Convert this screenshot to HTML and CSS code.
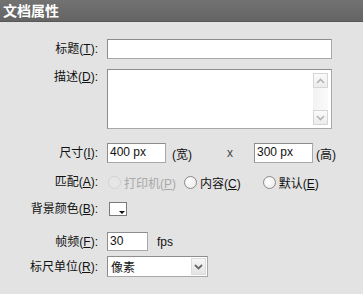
FILE: index.html
```html
<!DOCTYPE html>
<html lang="zh-CN">
<head>
<meta charset="utf-8">
<title>文档属性</title>
<link rel="stylesheet" href="styles.css">
</head>
<body>
<div class="panel">
  <div class="titlebar">文档属性</div>
  <div class="form">
    <div class="row r-title">
      <div class="label">标题(<u>T</u>):</div>
      <div class="field"><div class="input w-title"></div></div>
    </div>
    <div class="row r-desc">
      <div class="label top">描述(<u>D</u>):</div>
      <div class="field">
        <div class="textarea">
          <div class="ta-body"></div>
          <div class="scrollbar">
            <div class="sb-btn">
              <svg width="9" height="6" viewBox="0 0 9 6"><path d="M1 5 L4.5 1.5 L8 5" fill="none" stroke="#b5b5b5" stroke-width="1.6"/></svg>
            </div>
            <div class="sb-track"></div>
            <div class="sb-btn">
              <svg width="9" height="6" viewBox="0 0 9 6"><path d="M1 1 L4.5 4.5 L8 1" fill="none" stroke="#b5b5b5" stroke-width="1.6"/></svg>
            </div>
          </div>
        </div>
      </div>
    </div>
    <div class="row r-size">
      <div class="label">尺寸(<u>I</u>):</div>
      <div class="field">
        <div class="input w-size">400 px</div>
        <span class="unit u-w">(宽)</span>
        <span class="times">x</span>
        <div class="input w-size">300 px</div>
        <span class="unit u-h">(高)</span>
      </div>
    </div>
    <div class="row r-match">
      <div class="label">匹配(<u>A</u>):</div>
      <div class="field">
        <span class="radio disabled"></span><span class="rtext dis">打印机(<u>P</u>)</span>
        <span class="radio r2"></span><span class="rtext">内容(<u>C</u>)</span>
        <span class="radio r3"></span><span class="rtext">默认(<u>E</u>)</span>
      </div>
    </div>
    <div class="row r-bg">
      <div class="label">背景颜色(<u>B</u>):</div>
      <div class="field"><div class="swatch"><span class="tri"></span></div></div>
    </div>
    <div class="row r-fps">
      <div class="label">帧频(<u>F</u>):</div>
      <div class="field">
        <div class="input w-fps">30</div>
        <span class="unit u-fps">fps</span>
      </div>
    </div>
    <div class="row r-ruler">
      <div class="label">标尺单位(<u>R</u>):</div>
      <div class="field">
        <div class="select">
          <span class="sel-text">像素</span>
          <span class="sel-btn">
            <svg width="9" height="6" viewBox="0 0 9 6"><path d="M1 1 L4.5 4.5 L8 1" fill="none" stroke="#6a6a6a" stroke-width="1.8"/></svg>
          </span>
        </div>
      </div>
    </div>
  </div>
</div>
</body>
</html>
```

FILE: styles.css
```css
html, body {
  margin: 0;
  padding: 0;
  background: #e3e3e3;
}
body {
  width: 363px;
  height: 294px;
  overflow: hidden;
  font-family: "Liberation Sans", "Noto Sans CJK SC", sans-serif;
  font-size: 12px;
  color: #111;
}
.panel {
  width: 363px;
  height: 294px;
  background: #e3e3e3;
}
.titlebar {
  height: 22px;
  box-sizing: border-box;
  background: linear-gradient(#727272, #646464);
  border-bottom: 1px solid #585858;
  color: #fff;
  font-family: "Noto Sans CJK SC", sans-serif;
  font-weight: bold;
  font-size: 14px;
  line-height: 20px;
  padding-left: 3px;
}
.form {
  padding-top: 17px;
  display: flex;
  flex-direction: column;
}
.row {
  display: flex;
  align-items: center;
}
.label {
  width: 98px;
  flex: none;
  text-align: right;
  padding-right: 9px;
  box-sizing: content-box;
  white-space: nowrap;
  line-height: 14px;
  color: #111;
}
.label.top {
  align-self: flex-start;
  padding-top: 1px;
}
.field {
  display: flex;
  align-items: center;
  height: 100%;
}
u {
  text-decoration: underline;
  text-underline-offset: 1px;
}

.r-title { height: 20px; }
.r-desc { height: 60px; margin-top: 10px; }
.r-size { height: 20px; margin-top: 14px; }
.r-match { height: 14px; margin-top: 12px; }
.r-bg { height: 14px; margin-top: 13px; }
.r-fps { height: 19px; margin-top: 16px; }
.r-ruler { height: 21px; margin-top: 5px; }

.input {
  box-sizing: border-box;
  height: 100%;
  background: #fff;
  border: 1px solid #8d8d8d;
  border-right-color: #a8a8a8;
  border-bottom-color: #a8a8a8;
  padding-left: 2px;
  line-height: 17px;
  color: #111;
}
.w-title { width: 225px; }
.w-size { width: 59px; }
.w-fps { width: 41px; }

.textarea {
  box-sizing: border-box;
  width: 225px;
  height: 60px;
  background: #fff;
  border: 1px solid #8d8d8d;
  border-right-color: #a8a8a8;
  border-bottom-color: #a8a8a8;
  display: flex;
}
.ta-body { flex: 1; }
.scrollbar {
  width: 15px;
  margin: 3px 3px 3px 0;
  display: flex;
  flex-direction: column;
  background: linear-gradient(90deg, #f2f2f2, #fbfbfb);
}
.sb-btn {
  height: 15px;
  box-sizing: border-box;
  border: 1px solid #d6d6d6;
  background: linear-gradient(#fafafa, #ececec);
  display: flex;
  align-items: center;
  justify-content: center;
}
.sb-track { flex: 1; }

.unit { margin-left: 6px; }
.u-h { margin-left: 3px; }
.u-fps { margin-left: 9px; }
.times { margin-left: 35px; margin-right: 21px; color: #444; }

.radio {
  width: 11px;
  height: 11px;
  border: 1px solid #8a8a8a;
  border-radius: 50%;
  background: radial-gradient(circle at 40% 40%, #ffffff, #e6e6e6);
  box-sizing: content-box;
  flex: none;
  margin-left: 1px;
}
.radio.disabled {
  border-color: #d2d2d2;
  background: #e6e6e6;
}
.radio.r2 { margin-left: 8px; }
.radio.r3 { margin-left: 22px; }
.rtext { margin-left: 3px; white-space: nowrap; }
.rtext.dis { color: #a9a9a9; }

.swatch {
  position: relative;
  width: 18px;
  height: 14px;
  box-sizing: border-box;
  border: 1px solid #7a7a7a;
  background: #fff;
  margin-left: 2px;
}
.tri {
  position: absolute;
  right: 1px;
  bottom: 1px;
  width: 0;
  height: 0;
  border-left: 3px solid transparent;
  border-right: 3px solid transparent;
  border-top: 3px solid #111;
}

.select {
  box-sizing: border-box;
  width: 101px;
  height: 21px;
  background: #fff;
  border: 1px solid #8d8d8d;
  border-right-color: #a8a8a8;
  border-bottom-color: #a8a8a8;
  display: flex;
  align-items: center;
}
.sel-text {
  flex: 1;
  padding-left: 3px;
  font-family: "Noto Sans CJK SC", sans-serif;
}
.sel-btn {
  width: 15px;
  height: 17px;
  margin-right: 1px;
  box-sizing: border-box;
  border: 1px solid #dcdcdc;
  background: linear-gradient(#f6f6f6, #e4e4e4);
  display: flex;
  align-items: center;
  justify-content: center;
}
```
